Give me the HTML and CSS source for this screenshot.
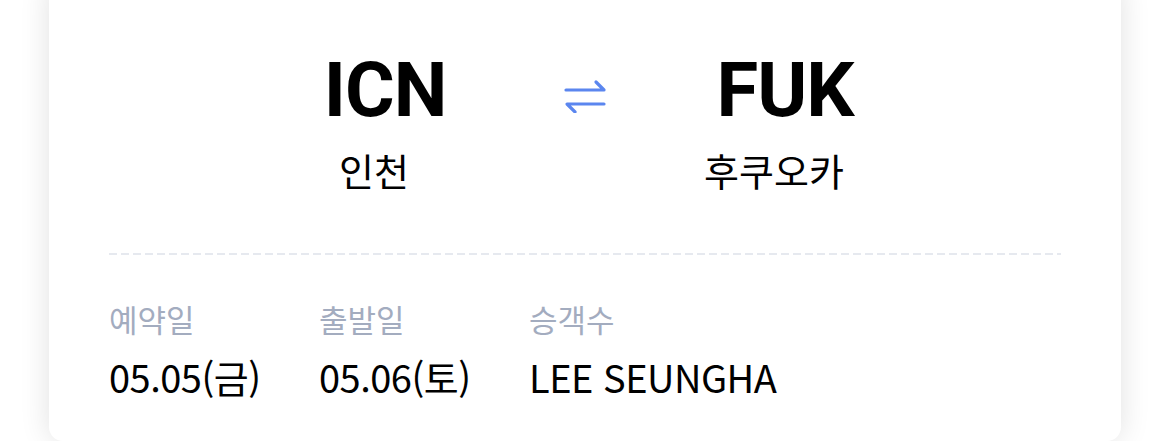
FILE: index.html
```html
<!DOCTYPE html>
<html lang="ko">
<head>
<meta charset="utf-8">
<link rel="stylesheet" href="styles.css">
</head>
<body>
<div class="card">
  <div class="route">
    <div class="port">
      <div class="code">ICN</div>
      <div class="city">인천</div>
    </div>
    <div class="swap">
      <svg width="44" height="34" viewBox="0 0 44 34" fill="none" stroke="#5b86ef" stroke-width="3.2" stroke-linecap="round" stroke-linejoin="round">
        <path d="M3 11 H41 L33 3"/>
        <path d="M41 25 H4 L12 33"/>
      </svg>
    </div>
    <div class="port">
      <div class="code">FUK</div>
      <div class="city">후쿠오카</div>
    </div>
  </div>
  <div class="divider"></div>
  <div class="info">
    <div class="item">
      <div class="label">예약일</div>
      <div class="value">05.05(금)</div>
    </div>
    <div class="item">
      <div class="label">출발일</div>
      <div class="value">05.06(토)</div>
    </div>
    <div class="item">
      <div class="label">승객수</div>
      <div class="value">LEE SEUNGHA</div>
    </div>
  </div>
</div>
</body>
</html>
```

FILE: styles.css
```css
html, body {
  margin: 0;
  padding: 0;
  background: #ffffff;
  overflow: hidden;
}
body {
  font-family: "Noto Sans CJK KR", "Noto Sans", sans-serif;
  color: #000;
}
.card {
  box-sizing: border-box;
  width: 1072px;
  height: 461px;
  margin: -20px 0 0 49px;
  padding: 72px 60px 0;
  background: #fff;
  border-radius: 14px;
  box-shadow: 0 0 30px rgba(0, 0, 0, 0.12);
}
.route {
  display: flex;
  justify-content: center;
  align-items: flex-start;
}
.port {
  width: 240px;
  display: flex;
  flex-direction: column;
  align-items: center;
}
.code {
  font-family: Roboto, "Liberation Sans", sans-serif;
  font-weight: 700;
  font-size: 76px;
  line-height: 76px;
  letter-spacing: -1px;
}
.city {
  font-size: 38px;
  line-height: 44px;
  margin-top: 20px;
  margin-right: 22px;
}
.swap {
  width: 160px;
  display: flex;
  justify-content: center;
  padding-top: 27px;
}
.divider {
  margin-top: 61px;
  height: 2px;
  background-image: linear-gradient(to right, #e6e9ef 0 8px, transparent 8px 12px);
  background-size: 12px 2px;
  background-repeat: repeat-x;
}
.info {
  display: flex;
  margin-top: 45px;
}
.item {
  width: 210px;
  white-space: nowrap;
}
.label {
  font-size: 31px;
  line-height: 38px;
  color: #a3acbf;
}
.value {
  font-size: 38px;
  line-height: 46px;
  margin-top: 16px;
  letter-spacing: -0.5px;
}
```
